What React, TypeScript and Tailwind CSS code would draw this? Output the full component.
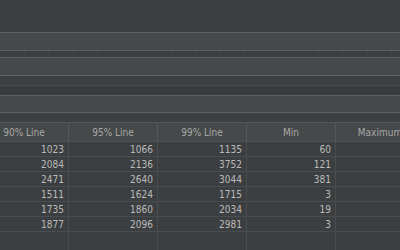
import React from "react";

const rows = [
  ["1023", "1066", "1135", "60"],
  ["2084", "2136", "3752", "121"],
  ["2471", "2640", "3044", "381"],
  ["1511", "1624", "1715", "3"],
  ["1735", "1860", "2034", "19"],
  ["1877", "2096", "2981", "3"],
];

const headers = ["90% Line", "95% Line", "99% Line", "Min", "Maximum"];

const font = {
  fontFamily: '"Liberation Sans Narrow", "DejaVu Sans Condensed", "Liberation Sans", sans-serif',
};

export default function App() {
  return (
    <div className="w-[400px] h-[250px] overflow-hidden bg-[#3c3f41] flex flex-col" style={font}>
      <div className="h-[32px] shrink-0 bg-[#3c3f41]" />
      <div className="h-px shrink-0 bg-[#5d6062]" />
      <div className="h-[17px] shrink-0 bg-[#45494a]" />
      <div className="h-px shrink-0 bg-[#5d6062]" />
      <div className="h-[6px] shrink-0 bg-[#3c3f41] flex">
        {Array.from({ length: 17 }).map((_, i) => (
          <div key={i} className="w-[24.5px] shrink-0 border-r border-[#444749]" />
        ))}
      </div>
      <div className="h-px shrink-0 bg-[#5a5d5f]" />
      <div className="h-[17px] shrink-0 bg-[#45494a]" />
      <div className="h-px shrink-0 bg-[#5d6062]" />
      <div className="h-[9px] shrink-0 bg-[#3c3f41]" />
      <div className="h-px shrink-0 bg-[#47494b]" />
      <div className="h-[9px] shrink-0 bg-[#393b3d]" />
      <div className="h-px shrink-0 bg-[#5d6062]" />
      <div className="h-[16px] shrink-0 bg-[#45494a]" />
      <div className="h-px shrink-0 bg-[#5d6062]" />
      <div className="h-[9px] shrink-0 bg-[#3c3f41]" />
      {/* table */}
      <div className="flex-1 border-t border-[#55585a] ml-[-20px] flex flex-col">
        <div className="h-[19px] shrink-0 flex bg-[#45494a] border-b border-[#4f5254]">
          {headers.map((h) => (
            <div
              key={h}
              className="w-[89px] shrink-0 border-r border-[#56595b] flex items-center justify-center text-[10px] text-[#a8a8a8] whitespace-nowrap overflow-hidden"
            >
              {h}
            </div>
          ))}
        </div>
        {rows.map((r, i) => (
          <div key={i} className="h-[15px] shrink-0 flex border-b border-[#4a4d4f]">
            {[...r, ""].map((c, j) => (
              <div
                key={j}
                className="w-[89px] shrink-0 border-r border-[#4a4d4f] flex items-center justify-end pr-[4px] text-[10px] text-[#bbbbbb]"
              >
                {c}
              </div>
            ))}
          </div>
        ))}
        <div className="flex-1 flex">
          {headers.map((h) => (
            <div key={h} className="w-[89px] shrink-0 border-r border-[#4a4d4f]" />
          ))}
        </div>
      </div>
    </div>
  );
}
